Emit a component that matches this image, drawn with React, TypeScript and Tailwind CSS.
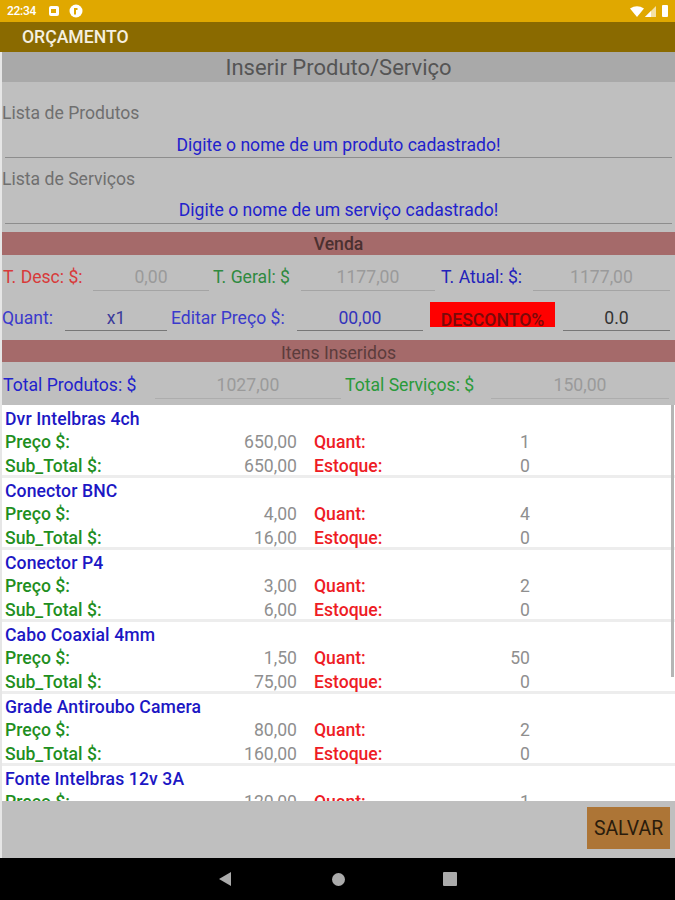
import React from "react";

const font = { fontFamily: "Roboto, sans-serif" };

function Field({ value, w, ml, lh = "leading-[30px]", color = "text-[#9a9a9a]", line = "border-[#a4a4a4]" }: { value: string; w: string; ml: string; lh?: string; color?: string; line?: string }) {
  return (
    <div className={`${w} ${ml} ${lh} h-[29px] shrink-0 border-b ${line} text-center text-[17.6px] ${color}`}>{value}</div>
  );
}

function Item({ name, preco, sub, q, cut }: { name: string; preco: string; sub: string; q: string; cut?: boolean }) {
  return (
    <div className={`h-[72px] shrink-0 pl-[3px] border-b-[3px] border-[#ededed] ${cut ? "border-b-0" : ""}`}>
      <div className="h-[24px] pt-px text-[17.6px] leading-[24px] font-medium tracking-[0.1px] text-[#1c17c4]">{name}</div>
      <div className="flex h-[24px] text-[17.6px] leading-[24px]">
        <div className="w-[112px] font-medium text-[#1f8f1f]">Preço $:</div>
        <div className="w-[180px] text-right text-[#8f8f8f]">{preco}</div>
        <div className="ml-[17px] w-[100px] font-medium text-[#ee1c25]">Quant:</div>
        <div className="w-[116px] text-right text-[#8f8f8f]">{q}</div>
      </div>
      <div className="flex h-[21px] text-[17.6px] leading-[24px]">
        <div className="w-[112px] font-medium text-[#1f8f1f]">Sub_Total $:</div>
        <div className="w-[180px] text-right text-[#8f8f8f]">{sub}</div>
        <div className="ml-[17px] w-[100px] font-medium text-[#ee1c25]">Estoque:</div>
        <div className="w-[116px] text-right text-[#8f8f8f]">0</div>
      </div>
    </div>
  );
}

export default function App() {
  return (
    <div className="relative flex h-[900px] w-[675px] flex-col overflow-hidden bg-[#bfbfbf]" style={font}>
      {/* status bar */}
      <div className="flex h-[22px] shrink-0 items-center bg-[#e0a800] pl-[7px] pr-[7px] text-white">
        <span className="text-[12px] font-medium tracking-[-0.3px]">22:34</span>
        <div className="ml-[13px] flex h-[10px] w-[10px] items-center justify-center rounded-[2px] bg-white">
          <div className="h-[4px] w-[5px] bg-[#e0a800]" />
        </div>
        <svg viewBox="0 0 14 14" className="ml-[10px] h-[14px] w-[14px]">
          <circle cx="7" cy="7" r="6.5" fill="#fff" />
          <path d="M5 4h3.500v2H7v4.500H5z" fill="#e0a800" />
        </svg>
        <svg viewBox="0 0 14 11" className="ml-auto h-[11px] w-[14px]">
          <path d="M0 2.500Q7 -2 14 2.500L7 11Z" fill="#fff" />
        </svg>
        <svg viewBox="0 0 11 11" className="ml-[1px] h-[11px] w-[11px]">
          <path d="M11 0V11H0Z" fill="#fff" opacity="0.65" />
          <path d="M6 5V11H0Z" fill="#fff" />
        </svg>
        <div className="ml-[6px] h-[12px] w-[6px] rounded-[1px] bg-white" />
      </div>

      {/* app bar */}
      <div className="flex h-[30px] shrink-0 items-center bg-[#8a6a00] pl-[22px] text-[17.6px] font-medium text-[#f5f0e0]">ORÇAMENTO</div>

      <div className="flex min-h-0 flex-1 flex-col border-l-2 border-[#e6e6e6]">
        <div className="h-[30px] shrink-0 bg-[#a9a9a9] text-center text-[22px] leading-[32px] text-[#555]">Inserir Produto/Serviço</div>

        <div className="mt-[20px] h-[22px] shrink-0 text-[17.6px] leading-[22px] text-[#6f6f6f]">Lista de Produtos</div>
        <div className="mx-[3px] mt-[2px] h-[32px] shrink-0 border-b border-[#8d8d8d] text-center text-[17.6px] leading-[38px] text-[#2222cc]">Digite o nome de um produto cadastrado!</div>
        <div className="mt-[9px] h-[22px] shrink-0 text-[17.6px] leading-[24px] text-[#6f6f6f]">Lista de Serviços</div>
        <div className="mx-[3px] mt-[2px] h-[33px] shrink-0 border-b border-[#8d8d8d] text-center text-[17.6px] leading-[39px] text-[#2222cc]">Digite o nome de um serviço cadastrado!</div>

        <div className="mt-[8px] h-[23px] shrink-0 bg-[#a56a6a] text-center text-[17.6px] font-medium leading-[24px] text-[#4b3030]">Venda</div>

        <div className="mt-[7px] flex h-[29px] shrink-0 items-start text-[17.6px] leading-[30px]">
          <span className="w-[91px] pl-px text-[#d83a3a]">T. Desc: $:</span>
          <Field value="0,00" w="w-[116px]" ml="" />
          <span className="ml-[4px] w-[88px] text-[#2f8a3f]">T. Geral: $</span>
          <Field value="1177,00" w="w-[134px]" ml="" />
          <span className="ml-[6px] w-[89px] text-[#2222bb]">T. Atual: $:</span>
          <Field value="1177,00" w="w-[137px]" ml="ml-[3px]" />
        </div>

        <div className="mt-[11px] flex h-[29px] shrink-0 items-start text-[17.6px] leading-[32px]">
          <span className="w-[63px] text-[#3a3acc]">Quant:</span>
          <Field value="x1" w="w-[102px]" ml="" lh="leading-[32px]" color="text-[#3a3a9a]" line="border-[#777]" />
          <span className="ml-[4px] w-[126px] text-[#3a3acc]">Editar Preço $:</span>
          <Field value="00,00" w="w-[126px]" ml="" lh="leading-[32px]" color="text-[#3333bb]" line="border-[#777]" />
          <div className="ml-[7px] h-[25px] w-[125px] shrink-0 overflow-hidden bg-[#ff0000] text-center text-[17.6px] font-medium leading-[37px] text-[#7a0a0a]">DESCONTO%</div>
          <Field value="0.0" w="w-[107px]" ml="ml-[8px]" lh="leading-[32px]" color="text-[#333]" line="border-[#777]" />
        </div>

        <div className="mt-[9px] h-[22px] shrink-0 bg-[#a56a6a] text-center text-[17.6px] leading-[26px] text-[#5c3c3c]">Itens Inseridos</div>

        <div className="mt-[8px] flex h-[29px] shrink-0 items-start text-[17.6px] leading-[30px]">
          <span className="w-[153px] pl-px text-[#2222cc]">Total Produtos: $</span>
          <Field value="1027,00" w="w-[186px]" ml="" line="border-[#adadad]" />
          <span className="ml-[4px] w-[146px] text-[#2a9a3a]">Total Serviços: $</span>
          <Field value="150,00" w="w-[178px]" ml="" line="border-[#adadad]" />
        </div>

        <div className="relative mt-[6px] flex h-[396px] shrink-0 flex-col overflow-hidden bg-white pt-px">
          <Item name="Dvr Intelbras 4ch" preco="650,00" sub="650,00" q="1" />
          <Item name="Conector BNC" preco="4,00" sub="16,00" q="4" />
          <Item name="Conector P4" preco="3,00" sub="6,00" q="2" />
          <Item name="Cabo Coaxial 4mm" preco="1,50" sub="75,00" q="50" />
          <Item name="Grade Antiroubo Camera" preco="80,00" sub="160,00" q="2" />
          <Item name="Fonte Intelbras 12v 3A" preco="120,00" sub="120,00" q="1" cut />
          <div className="absolute right-[1px] top-0 h-[272px] w-[3px] bg-[#b5b5b5]" />
        </div>

        <div className="flex min-h-0 flex-1 items-start justify-end pr-[5px] pt-[6px]">
          <div className="flex h-[42px] w-[83px] items-center justify-center bg-[#ad7536] pt-[2px] text-[19.4px] text-[#2a1c0c]">SALVAR</div>
        </div>
      </div>

      {/* nav bar */}
      <div className="relative flex h-[42px] shrink-0 items-center bg-black">
        <svg viewBox="0 0 14 14" className="ml-[218px] h-[14px] w-[14px]">
          <path d="M13 0V14L1 7Z" fill="#ababab" />
        </svg>
        <div className="ml-[100px] h-[13px] w-[13px] rounded-full bg-[#ababab]" />
        <div className="ml-[98px] h-[14px] w-[14px] rounded-[1px] bg-[#ababab]" />
      </div>
    </div>
  );
}
